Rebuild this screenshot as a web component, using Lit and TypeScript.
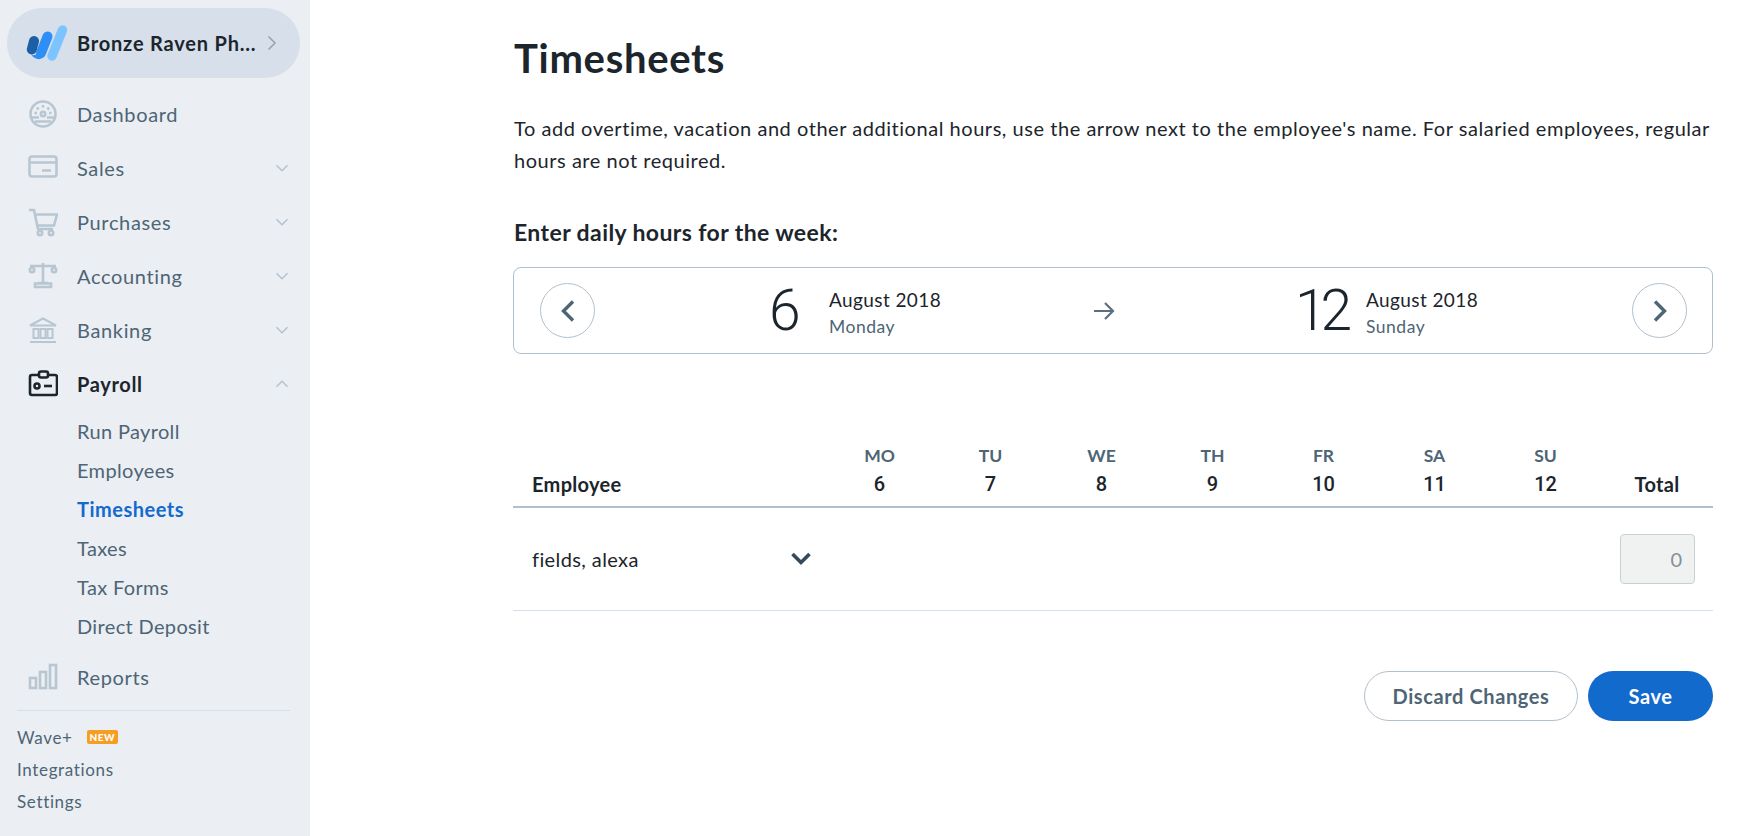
import { LitElement, html, css, svg } from "lit";
import { customElement } from "lit/decorators.js";

const chev = (up = false) => html`<svg class="chev" width="14" height="10" viewBox="0 0 14 10" fill="none" stroke="#b1c0cc" stroke-width="1.4"><path d="${up ? "M1.500 7.800 7 2.300l5.500 5.500" : "M1.500 2.200 7 7.700l5.500-5.500"}"/></svg>`;

const icons: Record<string, any> = {
  dash: svg`<circle cx="15" cy="15" r="12.500"/><circle cx="15" cy="15" r="2.200"/><path d="M15 6v2.500M9 8.500l1.500 2M21 8.500l-1.500 2M6.500 14h2.500M21 14h2.500M4 18.500h7M19 18.500h7M7 22.500h16"/>`,
  card: svg`<rect x="1.500" y="3.500" width="27" height="20" rx="2.500"/><path d="M1.500 9.500h27M14 17.500h9"/>`,
  cart: svg`<path d="M1 3h5l4 19h15M7 7.500h22l-3 11H9.500"/><circle cx="12" cy="26" r="2.200"/><circle cx="23" cy="26" r="2.200"/>`,
  scale: svg`<path d="M15 2v20M2 5h26M10 22h10M7 26h16v-3.500H7z"/><circle cx="4" cy="9" r="2.200"/><circle cx="26" cy="9" r="2.200"/>`,
  bank: svg`<g stroke-width="2"><path d="M2 10.500 15 3.500l13 7zM2 27h26"/><rect x="5.500" y="14" width="5" height="9"/><rect x="12.500" y="14" width="5" height="9"/><rect x="19.500" y="14" width="5" height="9"/></g>`,
  pay: svg`<path d="M11 6H4a2 2 0 0 0-2 2v16a2 2 0 0 0 2 2h23a2 2 0 0 0 2-2V8a2 2 0 0 0-2-2h-7"/><rect x="11" y="2.500" width="9" height="6" rx="2"/><circle cx="9" cy="17" r="2.500"/><path d="M16 17h8"/>`,
  rep: svg`<rect x="2" y="16" width="6" height="10"/><rect x="12" y="10" width="6" height="16"/><rect x="22" y="3" width="6" height="23"/>`,
};

const nav = [
  { k: "dash", t: "Dashboard" },
  { k: "card", t: "Sales", c: 1 },
  { k: "cart", t: "Purchases", c: 1 },
  { k: "scale", t: "Accounting", c: 1 },
  { k: "bank", t: "Banking", c: 1 },
];
const subs = ["Run Payroll", "Employees", "Timesheets", "Taxes", "Tax Forms", "Direct Deposit"];
const days = [["MO", "6"], ["TU", "7"], ["WE", "8"], ["TH", "9"], ["FR", "10"], ["SA", "11"], ["SU", "12"]];

@customElement("app-root")
export class AppRoot extends LitElement {
  static styles = css`
    :host { display: block; font-family: "Lato", "Open Sans", sans-serif; color: #1c252c; }
    * { box-sizing: border-box; }
    .page { display: flex; height: 836px; background: #fff; overflow: hidden; }
    .side { width: 310px; flex: none; background: #ebeef3; padding: 8px 0 0 0; }
    .brand { margin: 0 10px 0 7px; height: 70px; border-radius: 35px; background: #d6dfea; display: flex; align-items: center; padding-left: 19px; }
    .brand-name { margin-left: 9px; font-size: 20px; font-weight: 700; letter-spacing: 0.8px; color: #1c252c; white-space: nowrap; }
    .brand .more { margin-left: 10px; }
    .items { margin-top: 9px; }
    .item { height: 54px; display: flex; align-items: center; padding-left: 28px; color: #4d6575; font-size: 20px; }
    .item svg.ic { width: 30px; height: 30px; fill: none; stroke: #b8c6d2; stroke-width: 2.6; flex: none; }
    .item.on { color: #1c252c; font-weight: 700; }
    .item.on svg.ic { stroke: #1c252c; }
    .item .lbl { margin-left: 19px; flex: 1; letter-spacing: 0.65px; }
    .chev { margin-right: 21px; flex: none; }
    .subs { padding: 0 0 5px 77px; }
    .sub { height: 39px; display: flex; align-items: center; font-size: 20px; color: #4d6575; letter-spacing: 0.35px; }
    .sub.on { color: #136acd; font-weight: 700; letter-spacing: 0.5px; }
    hr { margin: 6px 20px 0 17px; border: 0; border-top: 1px solid #d4dfe9; }
    .foot { padding: 10px 0 0 17px; }
    .fl { height: 32px; display: flex; align-items: center; font-size: 17px; color: #4d6575; letter-spacing: 0.65px; }
    .new { margin-left: 14px; background: #f59e22; color: #fff; font-size: 10px; font-weight: 900; line-height: 14px; padding: 0 3px; border-radius: 2px; letter-spacing: 0.5px; }
    .main { width: 1200px; margin-left: 203px; }
    h1, p, h2 { padding-left: 1px; }
    h1 { margin: 33px 0 0; font-size: 40px; line-height: 50px; font-weight: 700; letter-spacing: 0.7px; color: #1c252c; }
    p { margin: 29px 0 0; font-size: 20px; line-height: 32px; color: #1c252c; letter-spacing: 0.54px; white-space: nowrap; }
    h2 { margin: 40px 0 0; font-size: 23px; line-height: 32px; font-weight: 700; letter-spacing: 0.4px; color: #1c252c; }
    .week { margin-top: 19px; height: 87px; border: 1px solid #b1c0cc; border-radius: 8px; display: grid; grid-template-columns: 55px 1fr 55px; align-items: center; padding: 0 25px 0 26px; }
    .circ { width: 55px; height: 55px; border-radius: 50%; border: 1px solid #b1c0cc; display: flex; align-items: center; justify-content: center; }
    .range { display: grid; grid-template-columns: 482px 54px 1fr; align-items: center; }
    .d { display: flex; align-items: center; }
    .d.a { padding-left: 174px; }
    .d.b { padding-left: 164px; }
    .d > div { padding-top: 4px; }
    .num { font-family: "Roboto", sans-serif; font-size: 57px; line-height: 60px; color: #1c252c; font-weight: 350; }
    .d.a .num { width: 60px; }
    .d.b .num { width: 71px; letter-spacing: -6px; }
    .m { font-size: 19px; line-height: 27px; color: #1c252c; letter-spacing: 0.4px; }
    .w { font-size: 17.500px; line-height: 27px; color: #4d6575; letter-spacing: 0.5px; }
    .arrow { justify-self: center; }
    .table { margin-top: 85px; }
    .row { display: grid; grid-template-columns: 311px repeat(7, 111px) 112px; }
    .head { border-bottom: 2px solid #b1c0cc; height: 69px; }
    .hc { display: flex; flex-direction: column; align-items: center; justify-content: flex-end; padding-bottom: 8px; }
    .hc .dn { font-size: 17.500px; line-height: 29px; font-weight: 700; color: #4d6575; }
    .hc .dd { font-family: "Roboto", sans-serif; font-size: 20px; line-height: 28px; font-weight: 500; color: #1c252c; }
    .hc.tot, .emp { font-size: 20px; line-height: 28px; font-weight: 700; color: #1c252c; letter-spacing: 0.3px; }
    .emp { display: flex; align-items: flex-end; padding: 0 0 8px 19px; }
    .body { height: 103px; border-bottom: 1px solid #d4dfe9; align-items: center; }
    .name { display: flex; align-items: center; justify-content: space-between; padding: 0 12px 0 19px; font-size: 20px; color: #1c252c; letter-spacing: 0.4px; }
    .total { grid-column: 9; justify-self: end; width: 75px; height: 50px; margin-right: 18px; background: #f0f2f2; border: 1px solid #c8d0d5; border-radius: 4px; display: flex; align-items: center; justify-content: flex-end; padding-right: 12px; font-size: 20px; color: #82919b; }
    .actions { margin-top: 60px; display: flex; justify-content: flex-end; gap: 10px; }
    button { height: 50px; border-radius: 25px; font: 700 20px "Lato", sans-serif; letter-spacing: 0.6px; }
    .ghost { width: 214px; background: #fff; border: 1px solid #b1c0cc; color: #4d6575; }
    .save { width: 125px; background: #136acd; border: 0; color: #fff; }
  `;

  render() {
    return html`<div class="page">
      <aside class="side">
        <div class="brand">
          <svg width="42" height="38" viewBox="26 24 42 38" fill="none" stroke-linecap="round">
            <path d="M62.500 30 52 56" stroke="#7cc4ff" stroke-width="9.500"/>
            <path d="M47.500 36.500 41 53" stroke="#2d8ff5" stroke-width="10"/>
            <path d="M31.500 55C37 56 38 52 39 49L46 49 45 55C43 60.500 35 60.500 31.500 55Z" fill="#2d8ff5"/>
            <path d="M34 41 31.800 49.500" stroke="#1c5fa5" stroke-width="10"/>
          </svg>
          <span class="brand-name">Bronze Raven Ph...</span>
          <svg class="more" width="12" height="18" viewBox="0 0 12 18" fill="none" stroke="#94a5b2" stroke-width="1.500"><path d="M2.500 2.500 9 9l-6.500 6.500"/></svg>
        </div>
        <div class="items">
          ${nav.map((n) => html`<div class="item"><svg class="ic" viewBox="0 0 30 30">${icons[n.k]}</svg><span class="lbl">${n.t}</span>${n.c ? chev() : ""}</div>`)}
          <div class="item on"><svg class="ic" viewBox="0 0 30 30">${icons.pay}</svg><span class="lbl">Payroll</span>${chev(true)}</div>
          <div class="subs">${subs.map((s) => html`<div class="sub ${s === "Timesheets" ? "on" : ""}">${s}</div>`)}</div>
          <div class="item"><svg class="ic" viewBox="0 0 30 30">${icons.rep}</svg><span class="lbl">Reports</span></div>
        </div>
        <hr />
        <div class="foot">
          <div class="fl">Wave+<span class="new">NEW</span></div>
          <div class="fl">Integrations</div>
          <div class="fl">Settings</div>
        </div>
      </aside>
      <main class="main">
        <h1>Timesheets</h1>
        <p>To add overtime, vacation and other additional hours, use the arrow next to the employee's name. For salaried employees, regular<br />hours are not required.</p>
        <h2>Enter daily hours for the week:</h2>
        <div class="week">
          <div class="circ"><svg width="16" height="24" viewBox="0 0 16 24" fill="none" stroke="#4d6575" stroke-width="3.400"><path d="M13 2.500 3.500 12l9.500 9.500"/></svg></div>
          <div class="range">
            <div class="d a"><span class="num">6</span><div><div class="m">August 2018</div><div class="w">Monday</div></div></div>
            <svg class="arrow" width="24" height="20" viewBox="0 0 24 20" fill="none" stroke="#5a7080" stroke-width="2.200"><path d="M2 10h19M13 2l8 8-8 8"/></svg>
            <div class="d b"><span class="num">12</span><div><div class="m">August 2018</div><div class="w">Sunday</div></div></div>
          </div>
          <div class="circ"><svg width="16" height="24" viewBox="0 0 16 24" fill="none" stroke="#4d6575" stroke-width="3.400"><path d="M3 2.500 12.500 12 3 21.500"/></svg></div>
        </div>
        <div class="table">
          <div class="row head">
            <div class="emp">Employee</div>
            ${days.map((d) => html`<div class="hc"><span class="dn">${d[0]}</span><span class="dd">${d[1]}</span></div>`)}
            <div class="hc tot">Total</div>
          </div>
          <div class="row body">
            <div class="name">fields, alexa
              <svg width="22" height="16" viewBox="0 0 22 16" fill="none" stroke="#36495a" stroke-width="3.600"><path d="M2.500 3 11 11.500 19.500 3"/></svg>
            </div>
            <div class="total">0</div>
          </div>
        </div>
        <div class="actions">
          <button class="ghost">Discard Changes</button>
          <button class="save">Save</button>
        </div>
      </main>
    </div>`;
  }
}
